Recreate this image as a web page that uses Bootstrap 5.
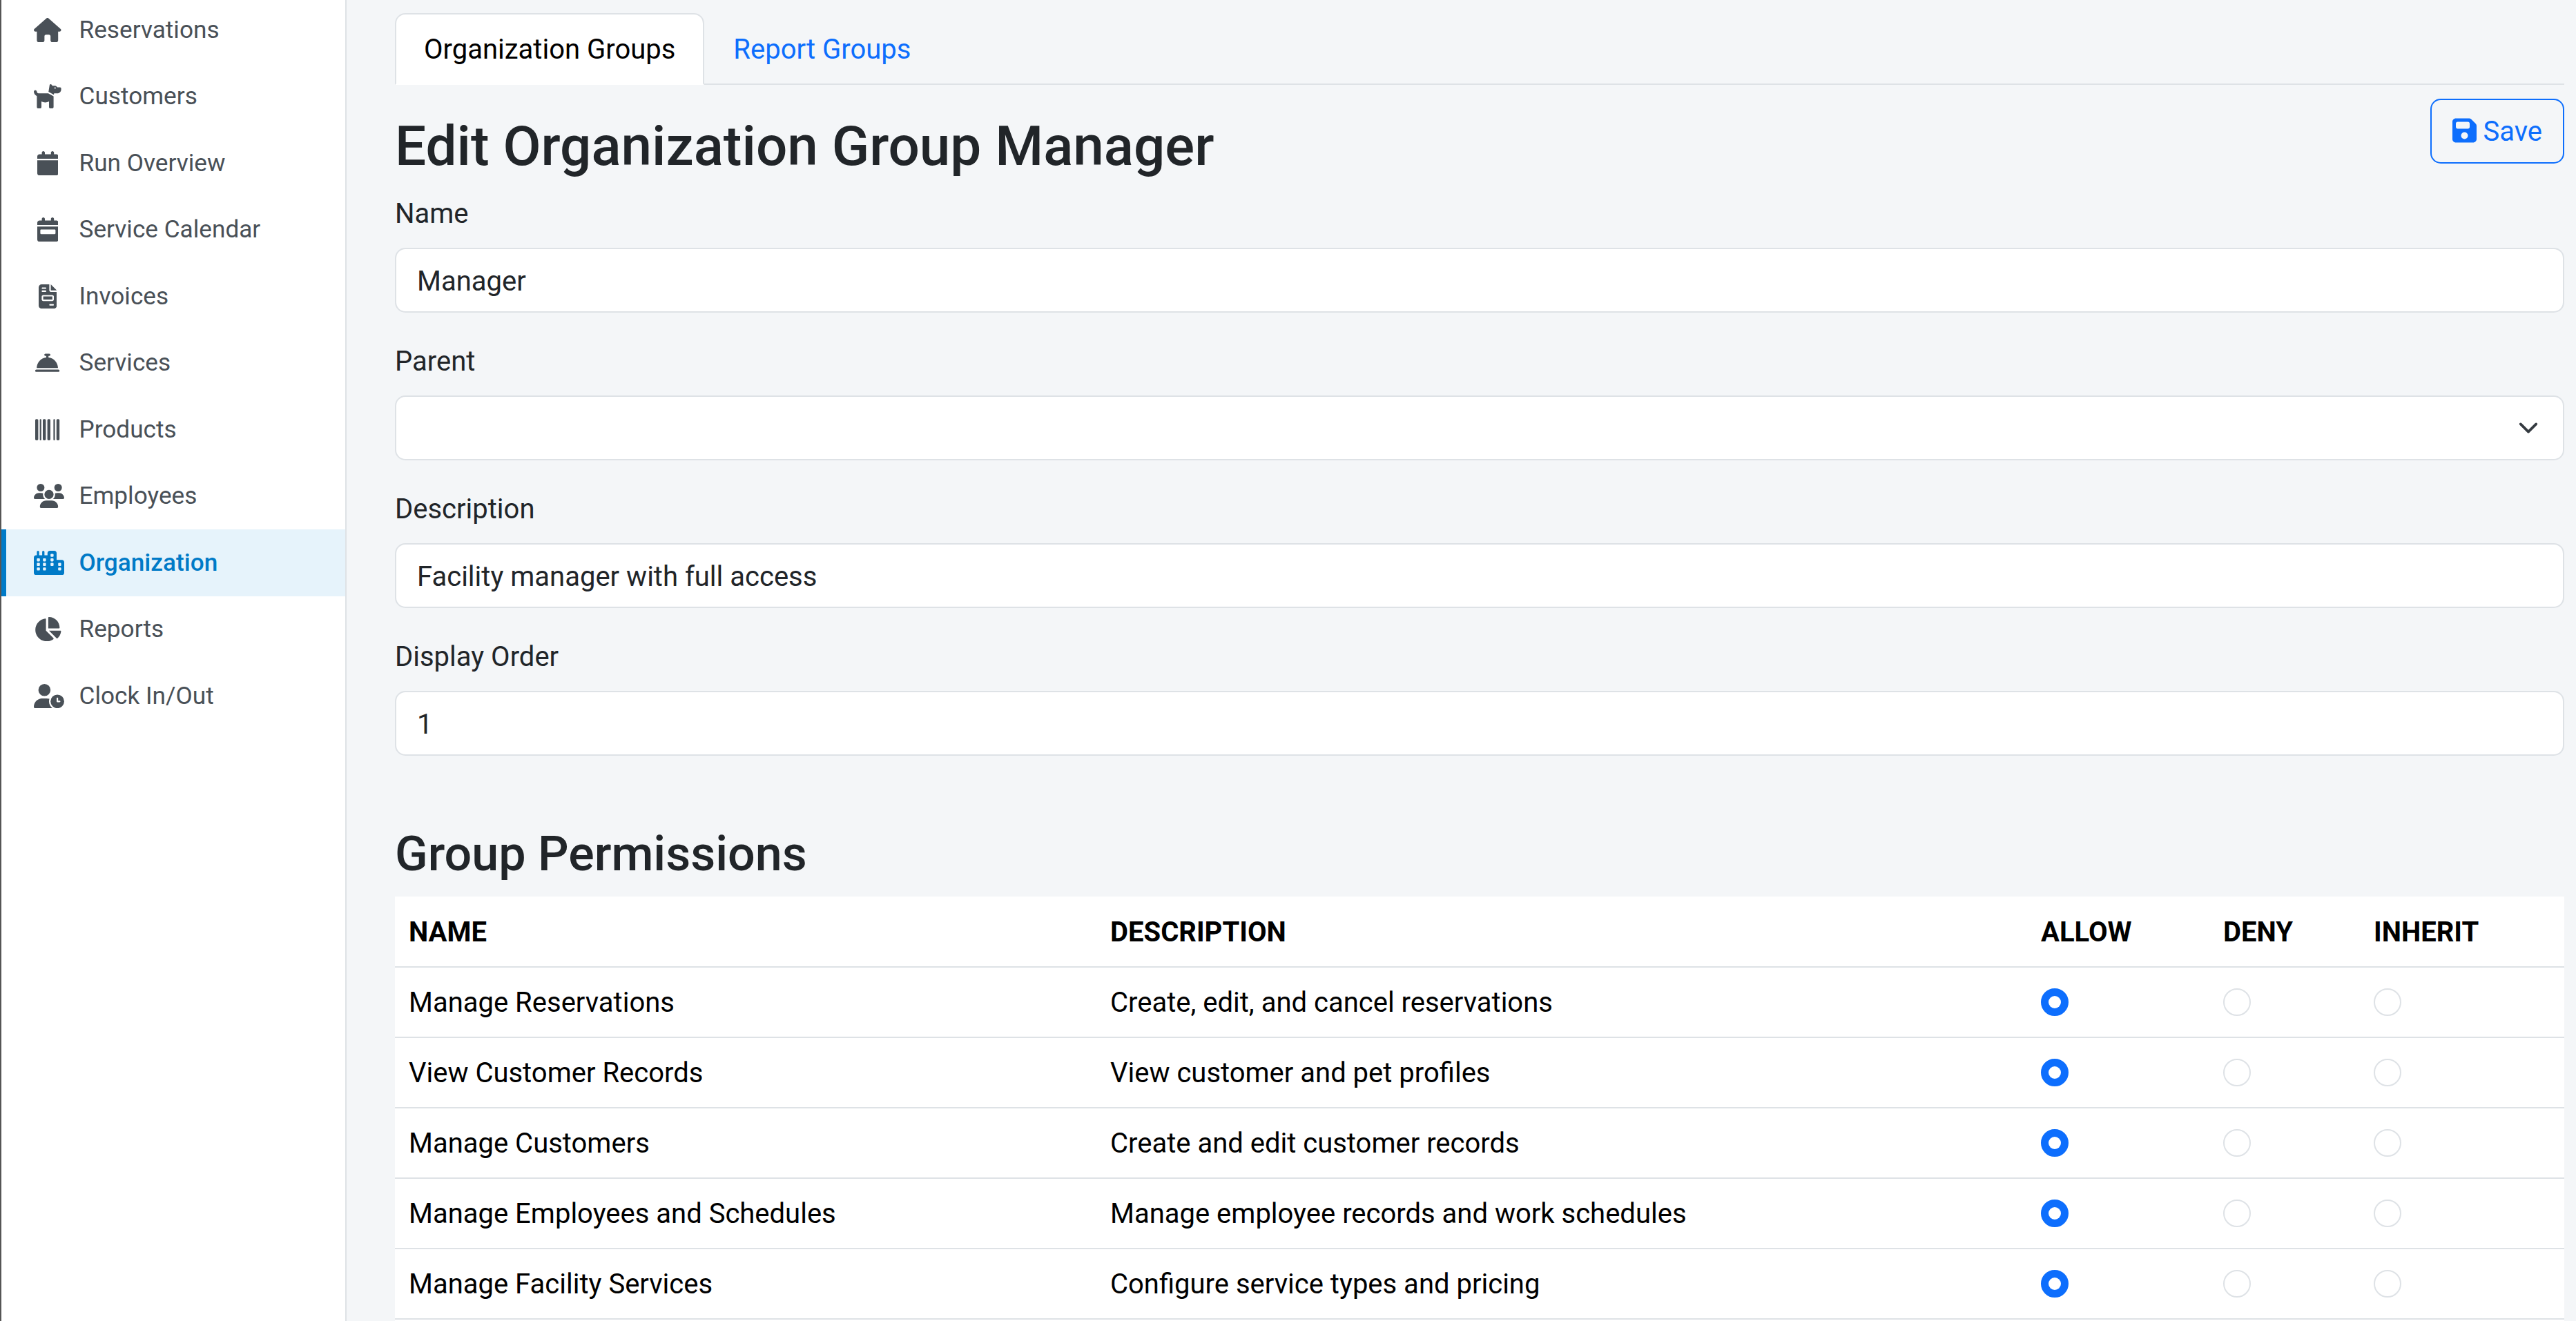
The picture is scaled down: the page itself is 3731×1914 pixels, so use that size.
<!DOCTYPE html>
<html lang="en">
<head>
<meta charset="utf-8">
<title>Edit Organization Group</title>
<link href="https://cdn.jsdelivr.net/npm/bootstrap@5.3.0/dist/css/bootstrap.min.css" rel="stylesheet">
<style>
:root{font-size:40px;--bs-border-width:2px;--bs-border-radius:15px;--bs-border-color:#dee2e6;--bs-body-font-family:Roboto,"Liberation Sans",sans-serif;--bs-body-color:#212529}
body{background:#f4f6f8;height:1914px;overflow:hidden;font-family:Roboto,"Liberation Sans",sans-serif}
.app-shell{height:1914px;border-left:2px solid #555;overflow:hidden}
.side-menu{width:500px;border-right:2px solid #dee2e6;margin-top:-5px;height:1919px}
.side-menu .nav-link{display:flex;align-items:center;height:96.5px;flex-shrink:0;padding:0 0 0 40px;border-left:7px solid transparent;border-radius:0;color:#495057;font-size:35.2px}
.side-menu .nav-link.active{color:#007ac7;background:#e6f3fb;border-left-color:#007ac7;font-weight:500}
.menu-icon{width:40px;margin-right:25.5px;flex:none;display:flex;justify-content:safe center}
.menu-icon svg{height:35.2px;flex:none;display:block;fill:currentColor;fill-rule:evenodd}
.page-main{padding:19px 17px 0 70px}
.page-main h2{padding-top:1px;margin-bottom:19px}
.form-label{padding-top:1px;margin-bottom:19px}
.nav-tabs .nav-link{border-width:2px;margin-bottom:-2px;padding-top:21px;padding-bottom:19px;color:#0d6efd}
.nav-tabs .nav-link.active{color:#000;background:#fff;border-color:#dee2e6 #dee2e6 #fff}
.form-control,.form-select{border:2px solid #dee2e6;border-radius:15px;height:94px;color:#212529}
.form-control{padding-top:16px;padding-bottom:14px}
.form-select{background-size:40px 30px}
.btn-save{border-width:2px;border-radius:15px;height:94px;padding-top:16px;padding-bottom:14px}
.btn-save svg{width:35px;height:40px;fill:currentColor;fill-rule:evenodd;vertical-align:-5px}
.perm-title{margin-top:60px}
.table{--bs-table-bg:#fff;--bs-table-color:#000;table-layout:fixed;color:#000}
.table>:not(caption)>*>*{border-bottom-width:2px;height:102px;padding-top:21px;padding-bottom:19px}
.table .form-check-input{display:block;float:none;width:40px;height:40px;margin:-1px 0 1px;border:2px solid #dee2e6}
.table .form-check-input:checked{border-color:#0d6efd}
</style>
</head>
<body>
<div class="app-shell d-flex">
  <nav class="side-menu nav flex-column flex-nowrap flex-shrink-0 bg-white">
    <a class="nav-link" href="#"><span class="menu-icon"><svg viewBox="0 0 576 512"><path d="M575.8 255.5c0 18-15 32.1-32 32.1h-32l.7 160.2c0 2.7-.2 5.4-.5 8.1V472c0 22.1-17.9 40-40 40H392c-22.1 0-40-17.9-40-40V384c0-17.7-14.3-32-32-32H256c-17.7 0-32 14.3-32 32v88c0 22.1-17.9 40-40 40H104c-22.1 0-40-17.9-40-40V287.6H32c-18 0-32-14-32-32.1c0-9 3-17 10-24L266.4 8c7-7 15-8 22-8s15 2 21 7L564.8 231.5c8 7 12 15 11 24z"/></svg></span>Reservations</a>
    <a class="nav-link" href="#"><span class="menu-icon"><svg viewBox="0 0 576 512"><path d="M309.6 158.5L332.7 19.8C334.6 8.4 344.5 0 356.1 0c7.5 0 14.5 3.5 19 9.5L392 32h52.1c12.7 0 24.9 5.1 33.9 14.1L496 64h56c13.3 0 24 10.7 24 24v24c0 44.2-35.8 80-80 80H426.7l-5.1 30.5-112-64zM416 256.1V480c0 17.7-14.3 32-32 32H352c-17.7 0-32-14.3-32-32V364.8c-24 12.3-51.2 19.2-80 19.2s-56-6.9-80-19.2V480c0 17.7-14.3 32-32 32H96c-17.7 0-32-14.3-32-32V249.8c-28.8-10.9-51.4-35.3-59.2-66.5L1 167.8c-4.3-17.1 6.1-34.5 23.3-38.8s34.5 6.1 38.8 23.3l3.9 15.5C70.5 182 83.3 192 98 192H303.8L416 256.1zM464 80a16 16 0 1 0-32 0 16 16 0 1 0 32 0z"/></svg></span>Customers</a>
    <a class="nav-link" href="#"><span class="menu-icon"><svg viewBox="0 0 448 512"><path d="M96 32V64H48C21.5 64 0 85.5 0 112v48H448V112c0-26.5-21.5-48-48-48H352V32c0-17.7-14.3-32-32-32s-32 14.3-32 32V64H160V32c0-17.7-14.3-32-32-32S96 14.3 96 32zM448 192H0V464c0 26.5 21.5 48 48 48H400c26.5 0 48-21.5 48-48V192z"/></svg></span>Run Overview</a>
    <a class="nav-link" href="#"><span class="menu-icon"><svg viewBox="0 0 448 512"><path d="M96 32V64H48C21.5 64 0 85.5 0 112v48H448V112c0-26.5-21.5-48-48-48H352V32c0-17.7-14.3-32-32-32s-32 14.3-32 32V64H160V32c0-17.7-14.3-32-32-32S96 14.3 96 32zM448 192H0V464c0 26.5 21.5 48 48 48H400c26.5 0 48-21.5 48-48V192zM80 256H368c8.8 0 16 7.2 16 16v64c0 8.8-7.2 16-16 16H80c-8.8 0-16-7.2-16-16V272c0-8.8 7.2-16 16-16z"/></svg></span>Service Calendar</a>
    <a class="nav-link" href="#"><span class="menu-icon"><svg viewBox="0 0 384 512"><path d="M64 0C28.7 0 0 28.7 0 64V448c0 35.3 28.7 64 64 64H320c35.3 0 64-28.7 64-64V160H256c-17.7 0-32-14.3-32-32V0H64zM256 0V128H384L256 0zM80 64h64c8.8 0 16 7.2 16 16s-7.2 16-16 16H80c-8.8 0-16-7.2-16-16s7.2-16 16-16zm0 64h64c8.8 0 16 7.2 16 16s-7.2 16-16 16H80c-8.8 0-16-7.2-16-16s7.2-16 16-16zm16 96H288c17.7 0 32 14.3 32 32v64c0 17.7-14.3 32-32 32H96c-17.7 0-32-14.3-32-32V256c0-17.7 14.3-32 32-32zm0 32v64H288V256H96zM240 416h64c8.8 0 16 7.2 16 16s-7.2 16-16 16H240c-8.8 0-16-7.2-16-16s7.2-16 16-16z"/></svg></span>Invoices</a>
    <a class="nav-link" href="#"><span class="menu-icon"><svg viewBox="0 0 512 512"><path d="M216 64c-13.3 0-24 10.7-24 24s10.7 24 24 24h16v33.3C119.6 157.2 32 252.4 32 368H480c0-115.6-87.6-210.8-200-222.7V112h16c13.3 0 24-10.7 24-24s-10.7-24-24-24H216zM24 400c-13.3 0-24 10.7-24 24s10.7 24 24 24H488c13.3 0 24-10.7 24-24s-10.7-24-24-24H24z"/></svg></span>Services</a>
    <a class="nav-link" href="#"><span class="menu-icon"><svg viewBox="0 0 512 512"><path d="M24 32C10.7 32 0 42.7 0 56V456c0 13.3 10.7 24 24 24H40c13.3 0 24-10.7 24-24V56c0-13.3-10.7-24-24-24H24zm88 0c-8.8 0-16 7.2-16 16V464c0 8.8 7.2 16 16 16s16-7.2 16-16V48c0-8.8-7.2-16-16-16zm72 0c-13.3 0-24 10.7-24 24V456c0 13.3 10.7 24 24 24h16c13.3 0 24-10.7 24-24V56c0-13.3-10.7-24-24-24H184zm96 0c-13.3 0-24 10.7-24 24V456c0 13.3 10.7 24 24 24h16c13.3 0 24-10.7 24-24V56c0-13.3-10.7-24-24-24H280zM448 56V456c0 13.3 10.7 24 24 24h16c13.3 0 24-10.7 24-24V56c0-13.3-10.7-24-24-24H472c-13.3 0-24 10.7-24 24zm-64-8V464c0 8.8 7.2 16 16 16s16-7.2 16-16V48c0-8.8-7.2-16-16-16s-16 7.2-16 16z"/></svg></span>Products</a>
    <a class="nav-link" href="#"><span class="menu-icon"><svg viewBox="0 0 640 512"><path d="M144 0a80 80 0 1 1 0 160A80 80 0 1 1 144 0zM512 0a80 80 0 1 1 0 160A80 80 0 1 1 512 0zM0 298.7C0 239.8 47.8 192 106.7 192h42.7c15.9 0 31 3.5 44.6 9.7c-1.3 7.2-1.9 14.7-1.9 22.3c0 38.2 16.8 72.5 43.3 96H21.3C9.6 320 0 310.4 0 298.7zM404.6 320c26.6-23.5 43.3-57.8 43.3-96c0-7.6-.7-15-1.9-22.3c13.6-6.3 28.7-9.7 44.6-9.7h42.7C592.2 192 640 239.8 640 298.7c0 11.8-9.6 21.3-21.3 21.3H404.6zM224 224a96 96 0 1 1 192 0 96 96 0 1 1-192 0zM128 485.3C128 411.7 187.7 352 261.3 352H378.7C452.3 352 512 411.7 512 485.3c0 14.7-11.9 26.7-26.7 26.7H154.7c-14.7 0-26.7-11.9-26.7-26.7z"/></svg></span>Employees</a>
    <a class="nav-link active" href="#"><span class="menu-icon"><svg viewBox="0 0 640 512"><path d="M480 48c0-26.5-21.5-48-48-48H336c-26.5 0-48 21.5-48 48V96H224V24c0-13.3-10.7-24-24-24s-24 10.7-24 24V96H112V24c0-13.3-10.7-24-24-24S64 10.7 64 24V96H48C21.5 96 0 117.5 0 144V464c0 26.5 21.5 48 48 48H592c26.5 0 48-21.5 48-48V240c0-26.5-21.5-48-48-48H480V48z
M80 160h32a16 16 0 0 1 16 16v32a16 16 0 0 1-16 16H80a16 16 0 0 1-16-16v-32a16 16 0 0 1 16-16z
M80 256h32a16 16 0 0 1 16 16v32a16 16 0 0 1-16 16H80a16 16 0 0 1-16-16v-32a16 16 0 0 1 16-16z
M80 352h32a16 16 0 0 1 16 16v32a16 16 0 0 1-16 16H80a16 16 0 0 1-16-16v-32a16 16 0 0 1 16-16z
M208 160h32a16 16 0 0 1 16 16v32a16 16 0 0 1-16 16h-32a16 16 0 0 1-16-16v-32a16 16 0 0 1 16-16z
M208 256h32a16 16 0 0 1 16 16v32a16 16 0 0 1-16 16h-32a16 16 0 0 1-16-16v-32a16 16 0 0 1 16-16z
M208 352h32a16 16 0 0 1 16 16v32a16 16 0 0 1-16 16h-32a16 16 0 0 1-16-16v-32a16 16 0 0 1 16-16z
M368 64h32a16 16 0 0 1 16 16v32a16 16 0 0 1-16 16h-32a16 16 0 0 1-16-16v-32a16 16 0 0 1 16-16z
M368 160h32a16 16 0 0 1 16 16v32a16 16 0 0 1-16 16h-32a16 16 0 0 1-16-16v-32a16 16 0 0 1 16-16z
M368 256h32a16 16 0 0 1 16 16v32a16 16 0 0 1-16 16h-32a16 16 0 0 1-16-16v-32a16 16 0 0 1 16-16z
M528 256h32a16 16 0 0 1 16 16v32a16 16 0 0 1-16 16h-32a16 16 0 0 1-16-16v-32a16 16 0 0 1 16-16z
M528 352h32a16 16 0 0 1 16 16v32a16 16 0 0 1-16 16h-32a16 16 0 0 1-16-16v-32a16 16 0 0 1 16-16z"/></svg></span>Organization</a>
    <a class="nav-link" href="#"><span class="menu-icon"><svg viewBox="0 0 576 512"><path d="M304 240V16.6c0-9 7-16.6 16-16.6C443.7 0 544 100.3 544 224c0 9-7.6 16-16.6 16H304zM32 272C32 150.7 122.1 50.3 239 34.3c9.2-1.3 17 6.1 17 15.4V288L412.5 444.5c6.7 6.7 6.2 17.7-1.5 23.1C371.8 495.6 323.8 512 272 512C139.5 512 32 404.6 32 272zm526.4 16c9.3 0 16.6 7.8 15.4 17c-7.7 55.9-34.6 105.6-73.9 142.3c-6 5.6-15.4 5.2-21.2-.7L320 288H558.4z"/></svg></span>Reports</a>
    <a class="nav-link" href="#"><span class="menu-icon"><svg viewBox="0 0 640 512"><path d="M224 0a128 128 0 1 1 0 256A128 128 0 1 1 224 0zM178.3 304h91.4c20.6 0 40.4 3.5 58.8 9.9C323 331 320 349.1 320 368c0 59.5 29.5 112.1 74.8 144H29.7C13.3 512 0 498.7 0 482.3C0 383.8 79.8 304 178.3 304zM352 368a144 144 0 1 1 288 0 144 144 0 1 1-288 0zm144-80c-8.8 0-16 7.2-16 16v64c0 8.8 7.2 16 16 16h48c8.8 0 16-7.2 16-16s-7.2-16-16-16H512V304c0-8.8-7.2-16-16-16z"/></svg></span>Clock In/Out</a>
  </nav>
  <main class="page-main flex-grow-1">
    <ul class="nav nav-tabs">
      <li class="nav-item"><a class="nav-link active" href="#">Organization Groups</a></li>
      <li class="nav-item"><a class="nav-link" href="#">Report Groups</a></li>
    </ul>
    <div class="d-flex justify-content-between align-items-start pt-2">
      <h2 class="mt-2">Edit Organization Group Manager</h2>
      <button type="button" class="btn btn-outline-primary btn-save"><svg viewBox="0 0 448 512"><path d="M64 32C28.7 32 0 60.7 0 96V416c0 35.3 28.7 64 64 64H384c35.3 0 64-28.7 64-64V173.3c0-17-6.7-33.3-18.7-45.3L352 50.7C340 38.7 323.7 32 306.7 32H64zm0 96c0-17.7 14.3-32 32-32H288c17.7 0 32 14.3 32 32v64c0 17.7-14.3 32-32 32H96c-17.7 0-32-14.3-32-32V128zM224 288a64 64 0 1 1 0 128 64 64 0 1 1 0-128z"/></svg> Save</button>
    </div>
    <form>
      <div class="mb-3"><label class="form-label d-block" for="gname">Name</label><input id="gname" class="form-control" value="Manager"></div>
      <div class="mb-3"><label class="form-label d-block" for="gparent">Parent</label><select id="gparent" class="form-select"><option></option></select></div>
      <div class="mb-3"><label class="form-label d-block" for="gdesc">Description</label><input id="gdesc" class="form-control" value="Facility manager with full access"></div>
      <div class="mb-3"><label class="form-label d-block" for="gorder">Display Order</label><input id="gorder" class="form-control" value="1"></div>
      <h3 class="perm-title pt-3">Group Permissions</h3>
      <table class="table align-middle">
        <colgroup><col style="width:1016px"><col style="width:1348px"><col style="width:264px"><col style="width:218px"><col></colgroup>
        <thead><tr><th>NAME</th><th>DESCRIPTION</th><th>ALLOW</th><th>DENY</th><th>INHERIT</th></tr></thead>
        <tbody>
          <tr><td>Manage Reservations</td><td>Create, edit, and cancel reservations</td><td><input class="form-check-input" type="radio" name="p1" checked></td><td><input class="form-check-input" type="radio" name="p1"></td><td><input class="form-check-input" type="radio" name="p1"></td></tr>
          <tr><td>View Customer Records</td><td>View customer and pet profiles</td><td><input class="form-check-input" type="radio" name="p2" checked></td><td><input class="form-check-input" type="radio" name="p2"></td><td><input class="form-check-input" type="radio" name="p2"></td></tr>
          <tr><td>Manage Customers</td><td>Create and edit customer records</td><td><input class="form-check-input" type="radio" name="p3" checked></td><td><input class="form-check-input" type="radio" name="p3"></td><td><input class="form-check-input" type="radio" name="p3"></td></tr>
          <tr><td>Manage Employees and Schedules</td><td>Manage employee records and work schedules</td><td><input class="form-check-input" type="radio" name="p4" checked></td><td><input class="form-check-input" type="radio" name="p4"></td><td><input class="form-check-input" type="radio" name="p4"></td></tr>
          <tr><td>Manage Facility Services</td><td>Configure service types and pricing</td><td><input class="form-check-input" type="radio" name="p5" checked></td><td><input class="form-check-input" type="radio" name="p5"></td><td><input class="form-check-input" type="radio" name="p5"></td></tr>
          <tr><td></td><td></td><td></td><td></td><td></td></tr>
        </tbody>
      </table>
    </form>
  </main>
</div>
<script src="https://cdn.jsdelivr.net/npm/bootstrap@5.3.0/dist/js/bootstrap.bundle.min.js"></script>
</body>
</html>
